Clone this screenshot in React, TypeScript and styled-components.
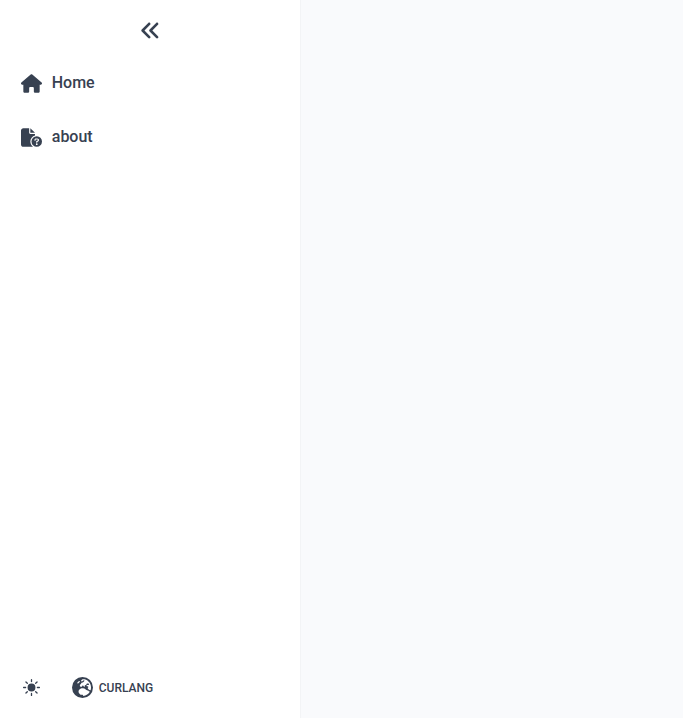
import React from 'react';
import styled, { createGlobalStyle } from 'styled-components';
import { FaAnglesLeft, FaHouse, FaFileCircleQuestion, FaEarthEurope } from 'react-icons/fa6';
import { HiSun } from 'react-icons/hi2';

const GlobalStyle = createGlobalStyle`
  * { box-sizing: border-box; }
  body { margin: 0; background: #f9fafc; color: #374151; font-family: Roboto, sans-serif; }
`;

const Page = styled.div`
  display: flex;
  height: 100vh;
`;

const Sidebar = styled.aside`
  display: flex;
  flex-direction: column;
  width: 301px;
  background: #fff;
  border-right: 1px solid #f3f4f6;
`;

const CollapseButton = styled.button`
  display: flex;
  justify-content: center;
  padding: 20px 0 0;
  border: 0;
  background: none;
  color: inherit;
`;

const Nav = styled.nav`
  display: flex;
  flex-direction: column;
  gap: 30px;
  padding: 30px 21px 0;
`;

const NavLink = styled.a`
  display: flex;
  align-items: center;
  gap: 9.75px;
  height: 24px;
  font-size: 16px;
  font-weight: 500;
  line-height: 24px;
`;

const Footer = styled.footer`
  display: flex;
  align-items: center;
  gap: 30px;
  margin-top: auto;
  padding: 0 21px 20px;
`;

const FooterButton = styled.button`
  display: flex;
  align-items: center;
  gap: 5.75px;
  padding: 0;
  border: 0;
  background: none;
  color: inherit;
  font: 500 12px/21px Roboto, sans-serif;
`;

const FooterLabel = styled.span`
  padding-top: 1px;
  line-height: 20px;
`;

const ICON_SIZE = 21;

export default function App() {
  return (
    <Page>
      <GlobalStyle />
      <Sidebar>
        <CollapseButton aria-label="Collapse sidebar"><FaAnglesLeft size={ICON_SIZE} /></CollapseButton>
        <Nav>
          <NavLink><FaHouse size={ICON_SIZE} />Home</NavLink>
          <NavLink><FaFileCircleQuestion size={ICON_SIZE} />about</NavLink>
        </Nav>
        <Footer>
          <FooterButton aria-label="Toggle theme"><HiSun size={ICON_SIZE} /></FooterButton>
          <FooterButton><FaEarthEurope size={ICON_SIZE} /><FooterLabel>CURLANG</FooterLabel></FooterButton>
        </Footer>
      </Sidebar>
    </Page>
  );
}
